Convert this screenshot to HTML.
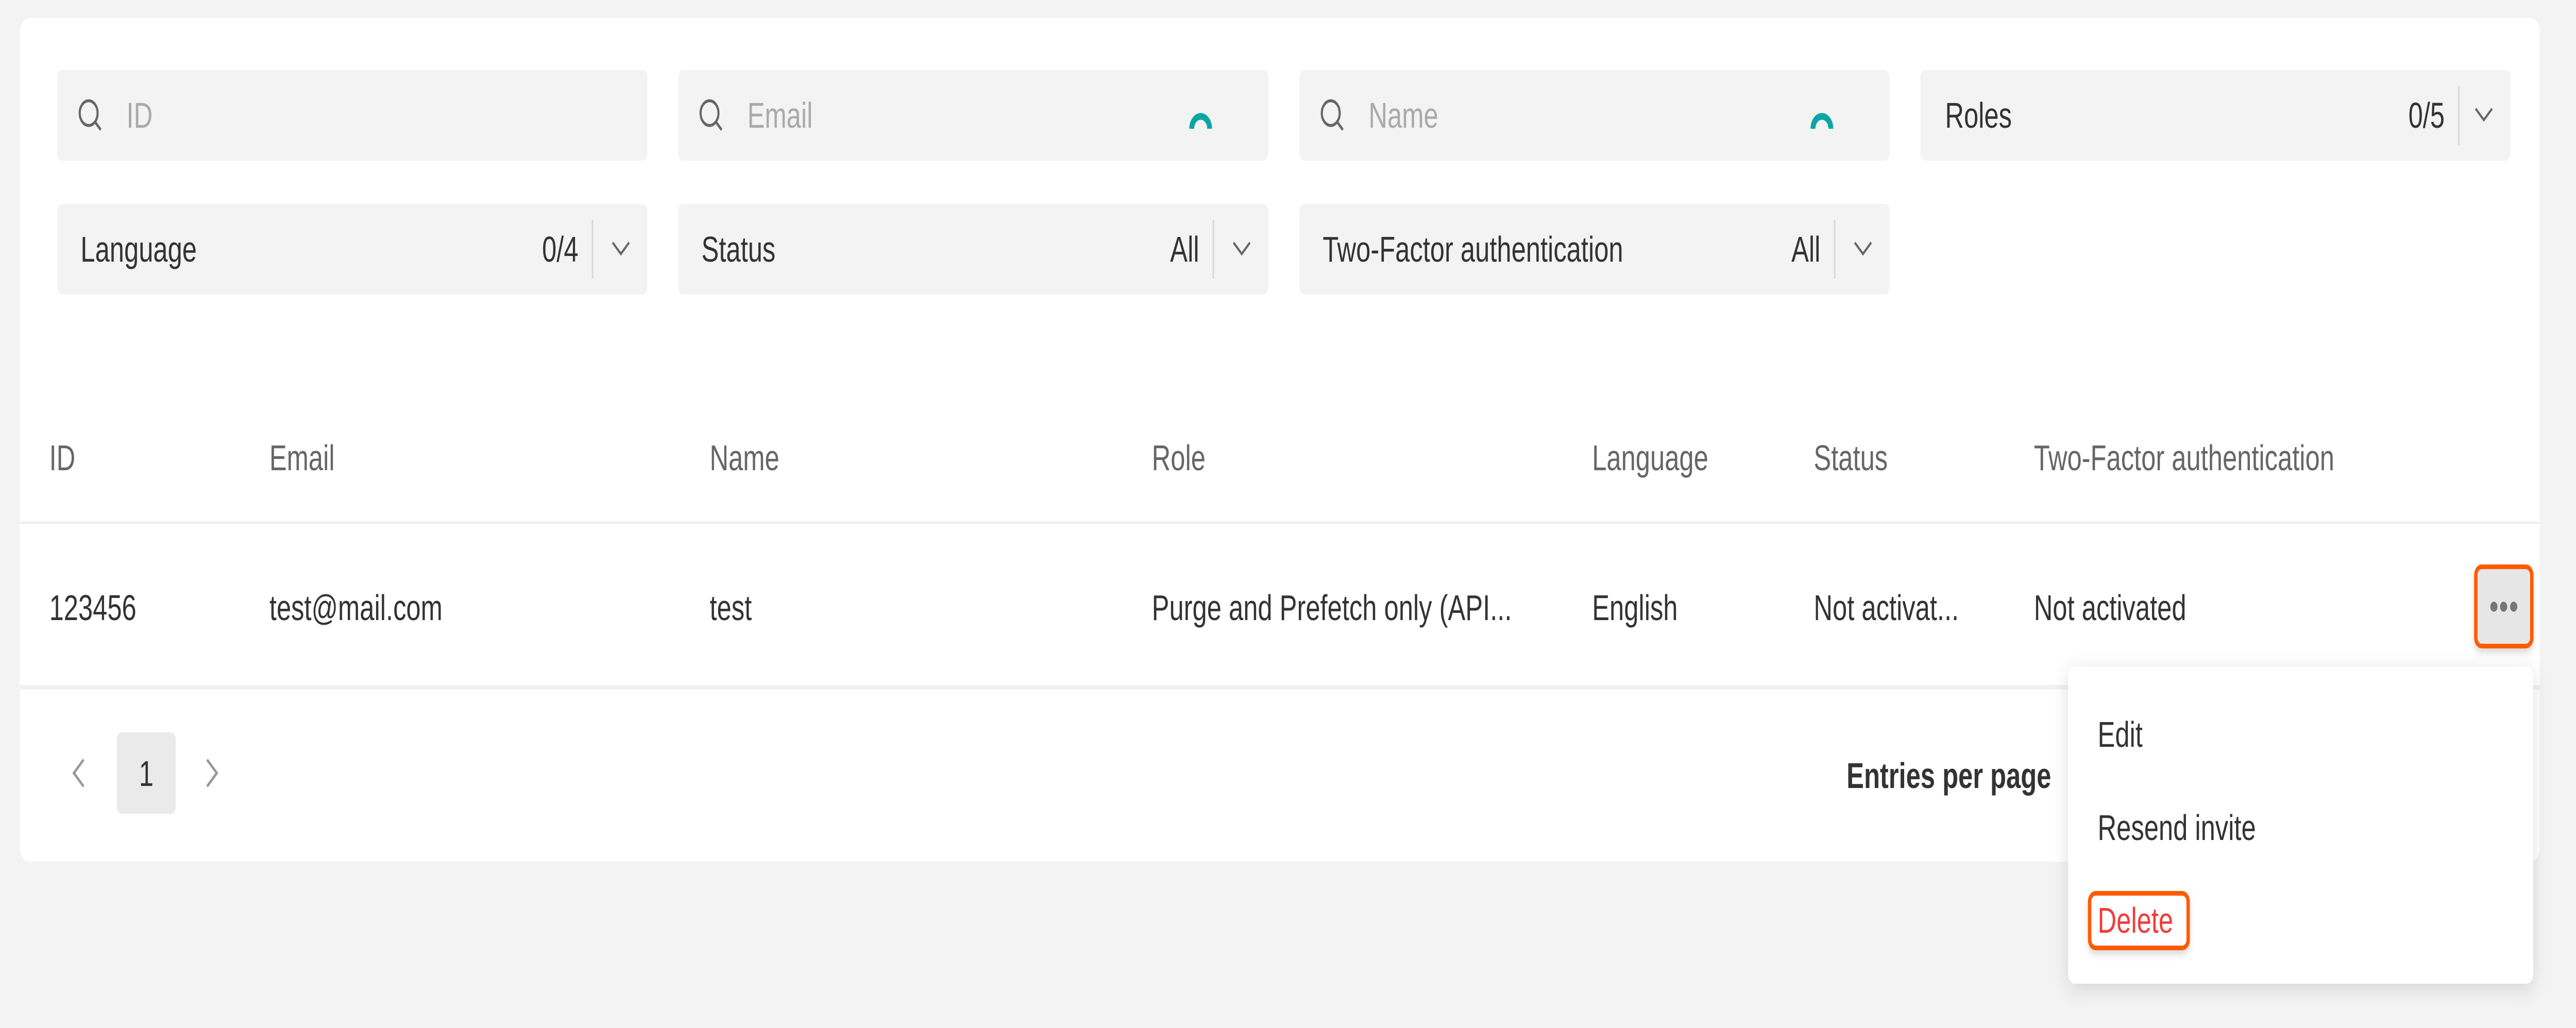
<!DOCTYPE html>
<html><head><meta charset="utf-8"><style>
html,body{margin:0;padding:0;width:100%;height:100%;overflow:hidden;background:#f3f3f3}
svg{display:block;width:100vw;height:100vh}
text{font-family:"Liberation Sans",sans-serif;font-size:70px;fill:#333}
.ph{fill:#aaa}.hd{fill:#666}
</style></head><body>
<svg viewBox="0 0 6904 1996" preserveAspectRatio="none" xmlns="http://www.w3.org/2000/svg">
<defs>
<filter id="sh" x="-20%" y="-20%" width="140%" height="150%"><feDropShadow dx="0" dy="9" stdDeviation="20" flood-color="#000" flood-opacity="0.13"/></filter>
<filter id="sh2" x="-20%" y="-20%" width="140%" height="150%"><feDropShadow dx="0" dy="8" stdDeviation="7" flood-color="#000" flood-opacity="0.15"/></filter>
<g id="srch"><circle cx="30.6" cy="30.6" r="24" fill="none" stroke="#666" stroke-width="5.7"/><path d="M48 48l15 15" stroke="#666" stroke-width="5.7"/></g>
<path id="spin" d="M11 57A24 24 0 0 1 59 57" fill="none" stroke="#0aa6a6" stroke-width="13"/>
<path id="chev" d="M4 9l22 22 22-22" fill="none" stroke="#666" stroke-width="5"/>
</defs>
<rect width="6904" height="1996" fill="#f3f3f3"/>
<rect x="53" y="35" width="6754" height="1638" rx="26" fill="#fff"/>
<!-- row 1 -->
<rect x="154" y="136" width="1581" height="176" rx="13" fill="#f3f3f3"/>
<use href="#srch" x="207" y="189"/><text x="339" y="248" class="ph">ID</text>
<rect x="1818" y="136" width="1581" height="176" rx="13" fill="#f3f3f3"/>
<use href="#srch" x="1871" y="189"/><text x="2003" y="248" class="ph">Email</text><use href="#spin" x="3183" y="193"/>
<rect x="3483" y="136" width="1581" height="176" rx="13" fill="#f3f3f3"/>
<use href="#srch" x="3536" y="189"/><text x="3668" y="248" class="ph">Name</text><use href="#spin" x="4848" y="193"/>
<rect x="5147" y="136" width="1581" height="176" rx="13" fill="#f3f3f3"/>
<text x="5213" y="248">Roles</text><text x="6552" y="248" text-anchor="end">0/5</text>
<rect x="6588" y="167" width="4" height="114" fill="#d8d8d8"/><use href="#chev" x="6631" y="202"/>
<!-- row 2 -->
<rect x="154" y="396" width="1581" height="176" rx="13" fill="#f3f3f3"/>
<text x="216" y="508">Language</text><text x="1550" y="508" text-anchor="end">0/4</text>
<rect x="1586" y="427" width="4" height="114" fill="#d8d8d8"/><use href="#chev" x="1638" y="462"/>
<rect x="1818" y="396" width="1581" height="176" rx="13" fill="#f3f3f3"/>
<text x="1880" y="508">Status</text><text x="3214" y="508" text-anchor="end">All</text>
<rect x="3250" y="427" width="4" height="114" fill="#d8d8d8"/><use href="#chev" x="3302" y="462"/>
<rect x="3483" y="396" width="1581" height="176" rx="13" fill="#f3f3f3"/>
<text x="3545" y="508">Two-Factor authentication</text><text x="4879" y="508" text-anchor="end">All</text>
<rect x="4915" y="427" width="4" height="114" fill="#d8d8d8"/><use href="#chev" x="4967" y="462"/>
<!-- headers -->
<text x="132" y="913" class="hd">ID</text>
<text x="722" y="913" class="hd">Email</text>
<text x="1902" y="913" class="hd">Name</text>
<text x="3087" y="913" class="hd">Role</text>
<text x="4267" y="913" class="hd">Language</text>
<text x="4861" y="913" class="hd">Status</text>
<text x="5451" y="913" class="hd">Two-Factor authentication</text>
<rect x="53" y="1013" width="6754" height="4" fill="#eee"/>
<text x="132" y="1204">123456</text>
<text x="722" y="1204">test@mail.com</text>
<text x="1902" y="1204">test</text>
<text x="3087" y="1204">Purge and Prefetch only (API...</text>
<text x="4267" y="1204">English</text>
<text x="4861" y="1204">Not activat...</text>
<text x="5451" y="1204">Not activated</text>
<rect x="6635.5" y="1100.5" width="150" height="154" rx="16" fill="#e6e6e6" stroke="#ff5a00" stroke-width="9" filter="url(#sh2)"/>
<circle cx="6684" cy="1178" r="9.7" fill="#777"/><circle cx="6710" cy="1178" r="9.7" fill="#777"/><circle cx="6737" cy="1178" r="9.7" fill="#777"/>
<rect x="53" y="1330" width="6754" height="9" fill="#f1f1f1"/>
<!-- pagination -->
<path d="M224 1475L198 1501l26 26" fill="none" stroke="#999" stroke-width="5.7"/>
<rect x="313" y="1422" width="158" height="158" rx="13" fill="#eaeaea"/>
<text x="392" y="1526" text-anchor="middle">1</text>
<path d="M555 1475l26 26-26 26" fill="none" stroke="#999" stroke-width="5.7"/>
<text x="4949" y="1530" font-weight="bold">Entries per page</text>
<!-- dropdown -->
<rect x="5543" y="1294" width="1246" height="616" rx="18" fill="#fff" filter="url(#sh)"/>
<text x="5622" y="1450">Edit</text>
<text x="5622" y="1631">Resend invite</text>
<rect x="5600.5" y="1734.5" width="264" height="106" rx="16" fill="#fff" stroke="#ff5a00" stroke-width="9" filter="url(#sh2)"/>
<text x="5622" y="1811" style="fill:#f03c3c">Delete</text>
</svg>
</body></html>
